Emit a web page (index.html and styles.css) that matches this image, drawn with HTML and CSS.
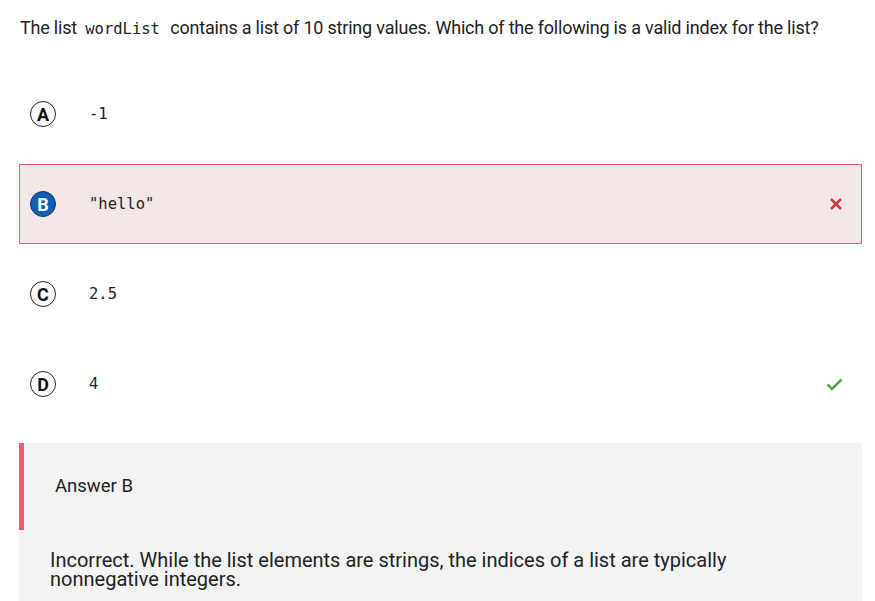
FILE: index.html
```html
<!DOCTYPE html>
<html>
<head>
<meta charset="utf-8">
<link rel="stylesheet" href="styles.css">
</head>
<body>
<div class="page">
  <p class="question">The list <code class="code">wordList</code> contains a list of 10 string values. Which of the following is a valid index for the list?</p>
  <div class="options">
    <div class="option">
      <span class="letter">A</span>
      <span class="value">-1</span>
    </div>
    <div class="option option-wrong">
      <span class="letter letter-selected">B</span>
      <span class="value">"hello"</span>
      <svg class="mark" width="14" height="14" viewBox="0 0 14 14"><path d="M2 2 L12 12 M12 2 L2 12" stroke="#c9374a" stroke-width="2.6" stroke-linecap="butt"/></svg>
    </div>
    <div class="option">
      <span class="letter">C</span>
      <span class="value">2.5</span>
    </div>
    <div class="option">
      <span class="letter">D</span>
      <span class="value">4</span>
      <svg class="mark" width="17" height="14" viewBox="0 0 17 14"><path d="M1.5 7.5 L6 12 L15.5 2.5" fill="none" stroke="#4caa3f" stroke-width="2.6"/></svg>
    </div>
  </div>
  <div class="explain">
    <div class="explain-head">Answer B</div>
    <div class="explain-body">Incorrect. While the list elements are strings, the indices of a list are typically nonnegative integers.</div>
  </div>
</div>
</body>
</html>
```
FILE: styles.css
```css
html, body {
  margin: 0;
  padding: 0;
  background: #ffffff;
}
.page {
  padding: 0 13px 0 19px;
  font-family: Roboto, "Liberation Sans", sans-serif;
  color: #222222;
}
.question {
  margin: 0;
  padding: 17px 0 0 1px;
  font-size: 18px;
  line-height: 22px;
  letter-spacing: -0.2px;
}
.code {
  font-family: "DejaVu Sans Mono", monospace;
  font-size: 15.5px;
  padding: 0 6px 0 4px;
  letter-spacing: 0;
}
.options {
  display: flex;
  flex-direction: column;
  gap: 10px;
  padding-top: 34px;
}
.option {
  display: flex;
  align-items: center;
  height: 80px;
  box-sizing: border-box;
  padding: 0 18px 0 10px;
  border: 1px solid transparent;
}
.option-wrong {
  background: #f3e7e7;
  border-color: #e35e6e;
}
.letter {
  width: 24px;
  height: 24px;
  border: 1.5px solid #222;
  border-radius: 50%;
  display: flex;
  align-items: center;
  justify-content: center;
  font-weight: 700;
  font-size: 18px;
  color: #111;
  flex-shrink: 0;
}
.letter-selected {
  background: #0b5fb5;
  color: #ffffff;
  border-color: #1d3557;
}
.value {
  margin-left: 33px;
  font-family: "DejaVu Sans Mono", monospace;
  font-size: 15.5px;
  color: #222;
  flex: 1;
}
.mark {
  display: block;
}
.explain {
  margin-top: 19px;
  background: #f3f3f3;
  padding-bottom: 20px;
}
.explain-head {
  height: 87px;
  box-sizing: border-box;
  border-left: 5px solid #e35e6e;
  padding-left: 31px;
  display: flex;
  align-items: center;
  font-size: 18.5px;
  padding-bottom: 2px;
}
.explain-body {
  padding: 21px 120px 0 31px;
  font-size: 20px;
  line-height: 19px;
  letter-spacing: 0;
}
```
